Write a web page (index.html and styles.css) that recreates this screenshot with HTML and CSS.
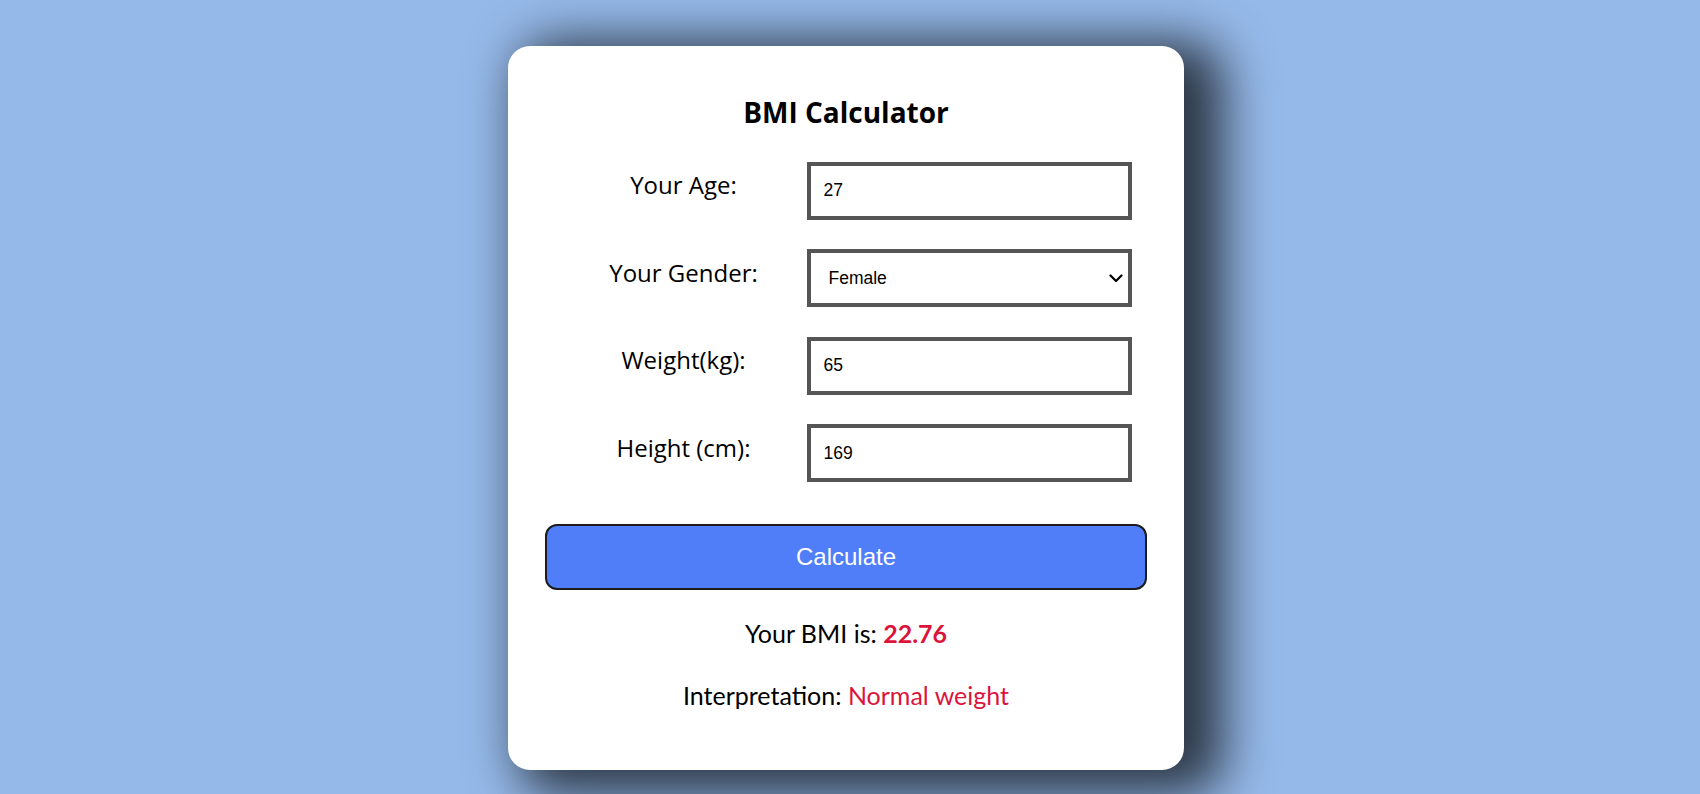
FILE: index.html
```html
<!DOCTYPE html>
<html lang="en">
<head>
<meta charset="utf-8">
<title>BMI Calculator</title>
<link rel="stylesheet" href="styles.css">
</head>
<body>
<main class="card">
  <h1 class="title">BMI Calculator</h1>
  <form class="form">
    <label class="label" for="age">Your Age:</label>
    <input class="field" id="age" type="text" value="27">
    <label class="label" for="gender">Your Gender:</label>
    <div class="select-wrap">
      <select class="field select" id="gender">
        <option>Male</option>
        <option selected>Female</option>
      </select>
      <svg class="chevron" width="14" height="9" viewBox="0 0 14 9" aria-hidden="true"><path d="M1.5 1.5 L7 7 L12.5 1.5" fill="none" stroke="#000" stroke-width="2.2" stroke-linecap="round" stroke-linejoin="round"/></svg>
    </div>
    <label class="label" for="weight">Weight(kg):</label>
    <input class="field" id="weight" type="text" value="65">
    <label class="label" for="height">Height (cm):</label>
    <input class="field" id="height" type="text" value="169">
  </form>
  <button class="calc" type="button">Calculate</button>
  <p class="result">Your BMI is: <span class="value bold">22.76</span></p>
  <p class="result second">Interpretation: <span class="value">Normal weight</span></p>
</main>
</body>
</html>
```
FILE: styles.css
```css
html, body {
  margin: 0;
  height: 100%;
}
body {
  box-sizing: border-box;
  padding-right: 8px;
  background: #95b9e9;
  overflow: hidden;
  font-family: "Open Sans", "Noto Sans", sans-serif;
  color: #000;
}
.card {
  box-sizing: border-box;
  width: 676px;
  margin: 46px auto 0;
  padding: 47px 37px 60px;
  background: #fff;
  border-radius: 22px;
  box-shadow: 25px 10px 50px 15px rgba(0, 0, 0, 0.7);
}
.title {
  margin: 0;
  font-size: 28px;
  line-height: 38px;
  font-weight: 700;
  text-align: center;
}
.form {
  display: grid;
  grid-template-columns: 246px 325px;
  justify-content: center;
  row-gap: 29.5px;
  margin: 30.7px 0 0;
}
.label {
  align-self: start;
  padding-top: 6.6px;
  font-size: 24px;
  line-height: 33px;
  text-align: center;
}
.field {
  box-sizing: border-box;
  width: 325px;
  height: 58px;
  margin: 0;
  padding: 0 13px;
  border: 4px solid #555;
  border-radius: 0;
  background: #fff;
  color: #000;
  font-family: "Liberation Sans", Arial, sans-serif;
  font-size: 17.5px;
  outline: none;
}
.select-wrap {
  position: relative;
  width: 325px;
  height: 58px;
}
.select {
  display: block;
  appearance: none;
  -webkit-appearance: none;
  padding-left: 18px;
  padding-right: 36px;
}
.chevron {
  position: absolute;
  right: 9px;
  top: 25px;
  pointer-events: none;
}
.calc {
  display: block;
  box-sizing: border-box;
  width: 100%;
  height: 66px;
  margin: 42px 0 0;
  border: 2.5px solid #1c1c1c;
  border-radius: 12px;
  background: #4f7ef8;
  color: #fff;
  font-family: "Liberation Sans", Arial, sans-serif;
  font-size: 24px;
}
.result {
  margin: 28px 0 0;
  font-family: Lato, "Open Sans", sans-serif;
  font-size: 25px;
  line-height: 30px;
  text-align: center;
}
.result.second {
  margin-top: 32px;
}
.value {
  color: #dc143c;
}
.bold {
  font-weight: 700;
}
```
